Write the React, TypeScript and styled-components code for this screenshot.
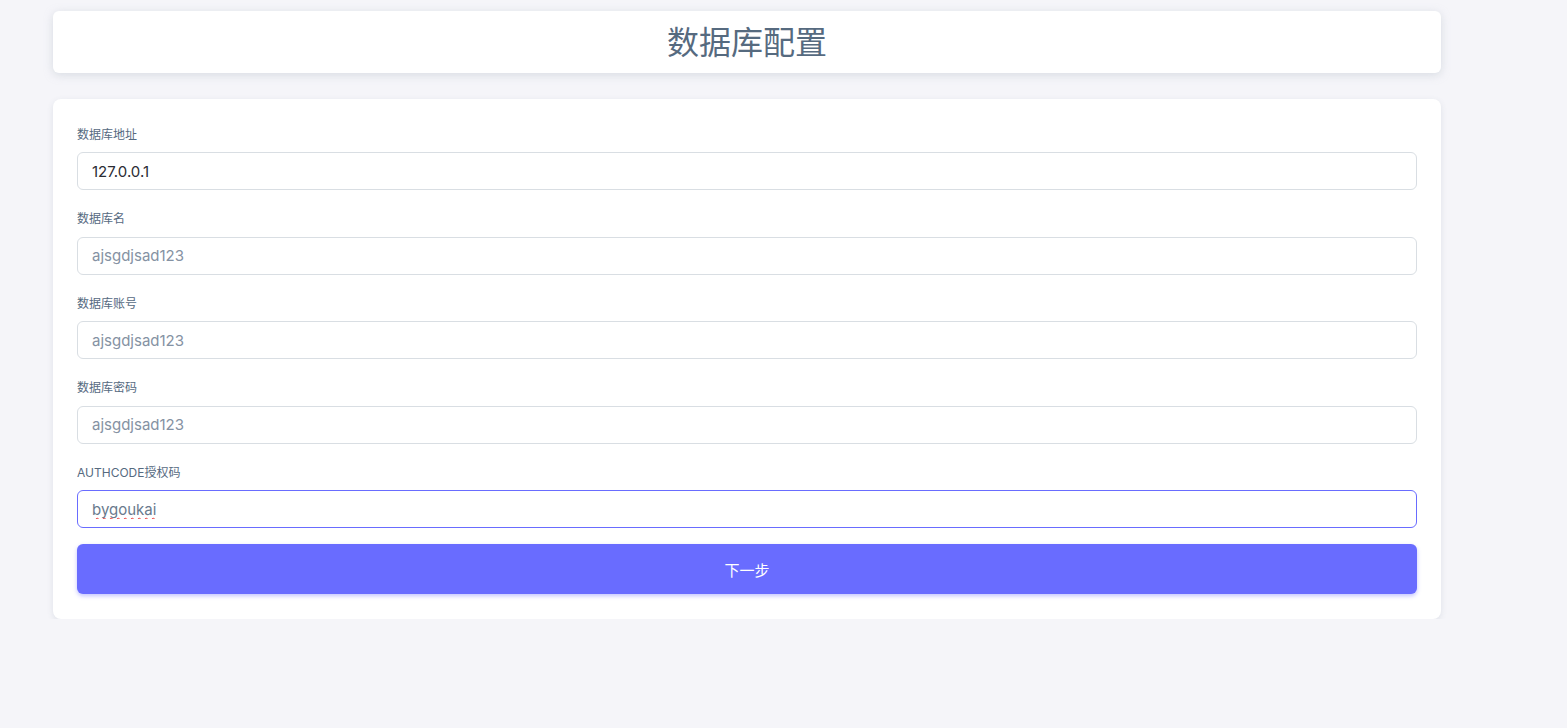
import React from 'react';
import styled, { createGlobalStyle } from 'styled-components';

const GlobalStyle = createGlobalStyle`
    body {
        margin: 0;
        background: #f5f5f9;
        font-family: Inter, "Noto Sans CJK SC", sans-serif;
        color: #697a8d;
    }
`;

const Page = styled.div`
    width: 1388px;
    padding: 11px 0 0 53px;
    display: flex;
    flex-direction: column;
    gap: 26px;
`;

const HeaderCard = styled.div`
    height: 62px;
    background: #ffffff;
    border-radius: 6px;
    box-shadow: 0 2px 10px rgba(161, 172, 184, 0.35);
    display: flex;
    align-items: center;
    justify-content: center;
`;

const Title = styled.h1`
    margin: 2px 0 0;
    font-size: 32px;
    font-weight: 400;
    color: #566a7f;
    line-height: 1;
`;

const FormCard = styled.form`
    background: #ffffff;
    border-radius: 8px;
    box-shadow: 0 2px 6px rgba(67, 89, 113, 0.12);
    padding: 27px 24px 25px;
    display: flex;
    flex-direction: column;
`;

const Field = styled.div`
    display: flex;
    flex-direction: column;
    margin-bottom: 20px;

    &:last-of-type {
        margin-bottom: 16px;
    }
`;

const Label = styled.label`
    font-size: 12px;
    line-height: 18.4px;
    color: #566a7f;
    margin-bottom: 8px;
`;

const TextInput = styled.input<{ $active?: boolean; $dark?: boolean }>`
    box-sizing: border-box;
    height: 38px;
    padding: 0 14px;
    border: 1px solid ${p => (p.$active ? '#696cff' : '#d9dee3')};
    border-radius: 6px;
    font-family: Inter, "Noto Sans CJK SC", sans-serif;
    font-size: 15px;
    color: ${p => (p.$dark ? '#2b2c33' : '#697a8d')};
    background: #ffffff;
    outline: none;
    ${p => p.$active && 'text-decoration: underline wavy #e83a3a; text-decoration-thickness: 1px; text-decoration-skip-ink: none; text-underline-offset: 2px;'}

    &::placeholder {
        color: #8592a3;
    }
`;

const SubmitButton = styled.button`
    height: 50px;
    border: 0;
    border-radius: 6px;
    background: #696cff;
    color: #ffffff;
    font-family: Inter, "Noto Sans CJK SC", sans-serif;
    font-size: 15px;
    box-shadow: 0 2px 4px rgba(105, 108, 255, 0.4);
    cursor: pointer;
`;

type FieldDef = {
    label: string;
    value?: string;
    placeholder?: string;
    dark?: boolean;
    active?: boolean;
};

const fields: FieldDef[] = [
    { label: '数据库地址', value: '127.0.0.1', dark: true },
    { label: '数据库名', placeholder: 'ajsgdjsad123' },
    { label: '数据库账号', placeholder: 'ajsgdjsad123' },
    { label: '数据库密码', placeholder: 'ajsgdjsad123' },
    { label: 'AUTHCODE授权码', value: 'bygoukai', active: true }
];

export default function App() {
    return (
        <>
            <GlobalStyle />
            <Page>
                <HeaderCard>
                    <Title>数据库配置</Title>
                </HeaderCard>
                <FormCard onSubmit={ e => e.preventDefault() }>
                    {
                        fields.map((f, i) => (
                            <Field key={ i }>
                                <Label htmlFor={ `field-${i}` }>{ f.label }</Label>
                                <TextInput
                                    id={ `field-${i}` }
                                    defaultValue={ f.value }
                                    placeholder={ f.placeholder }
                                    $dark={ f.dark }
                                    $active={ f.active }
                                />
                            </Field>
                        ))
                    }
                    <SubmitButton type='submit'>下一步</SubmitButton>
                </FormCard>
            </Page>
        </>
    );
}
